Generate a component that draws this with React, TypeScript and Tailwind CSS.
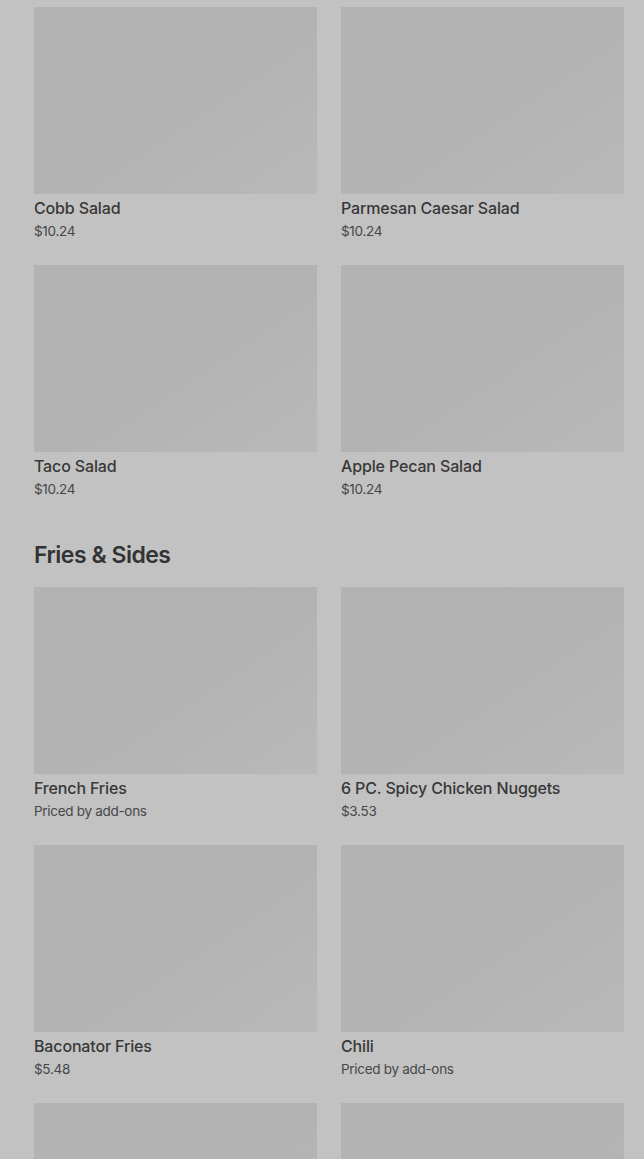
import { FC } from "react";

type Item = { name: string; price: string };

const salads: Item[] = [
  { name: "Cobb Salad", price: "$10.24" },
  { name: "Parmesan Caesar Salad", price: "$10.24" },
  { name: "Taco Salad", price: "$10.24" },
  { name: "Apple Pecan Salad", price: "$10.24" },
];

const sides: Item[] = [
  { name: "French Fries", price: "Priced by add-ons" },
  { name: "6 PC. Spicy Chicken Nuggets", price: "$3.53" },
  { name: "Baconator Fries", price: "$5.48" },
  { name: "Chili", price: "Priced by add-ons" },
];

const Card: FC<{ item?: Item }> = ({ item }) => (
  <div>
    <div className="h-[187px] bg-linear-to-br from-[#b3b3b3] from-55% to-[#b9b9b9]" />
    {item && (
      <>
        <p className="mt-1 text-[16px] leading-5 font-medium text-[#383838] tracking-[-0.15px]">
          {item.name}
        </p>
        <p className="mt-[3px] text-[13.5px] leading-5 text-[#474747] tracking-[-0.3px]">
          {item.price}
        </p>
      </>
    )}
  </div>
);

const App: FC = () => {
  return (
    <div
      className="h-screen overflow-hidden bg-[#c2c2c2] pl-[34px] pr-[20px] pt-[7px]"
      style={{ fontFamily: "Inter, 'Noto Sans', sans-serif" }}
    >
      <div className="grid grid-cols-2 gap-6">
        {salads.map((s) => (
          <Card key={s.name} item={s} />
        ))}
      </div>
      <h2 className="mt-[42px] mb-[18px] text-[23px] leading-7 font-semibold text-[#333333] tracking-[-0.5px]">
        Fries &amp; Sides
      </h2>
      <div className="grid grid-cols-2 gap-6">
        {sides.map((s) => (
          <Card key={s.name} item={s} />
        ))}
        {/* next row, only the top of the pictures is in view */}
        <Card />
        <Card />
      </div>
    </div>
  );
};

export default App;
